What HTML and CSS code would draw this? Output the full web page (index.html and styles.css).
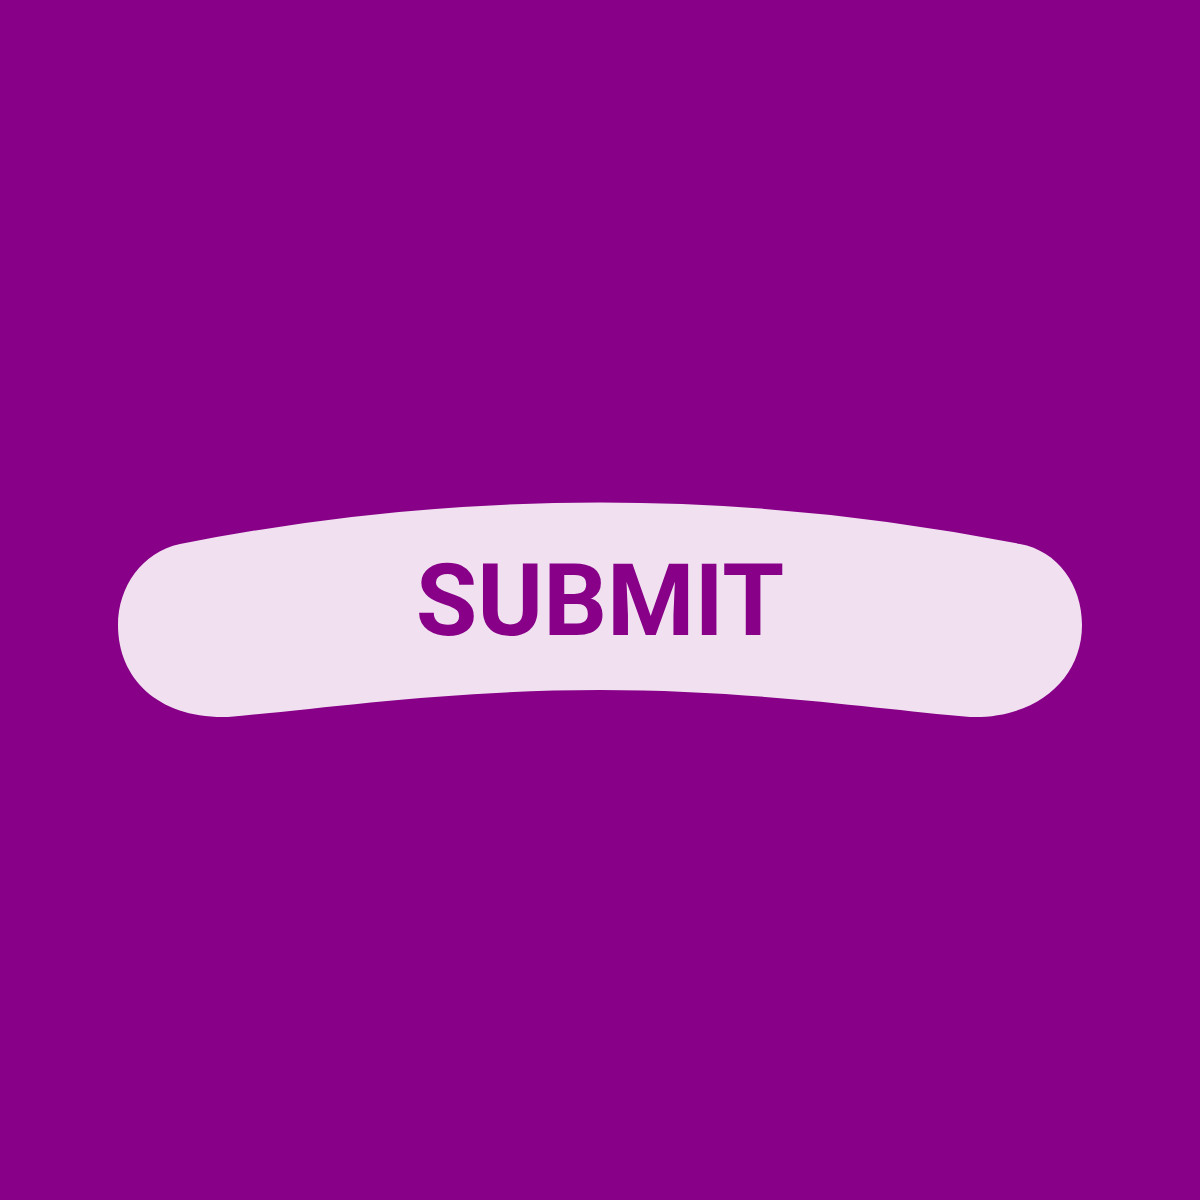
FILE: index.html
```html
<!DOCTYPE html>
<html lang="en">
<head>
<meta charset="utf-8">
<title>Submit</title>
<link rel="stylesheet" href="styles.css">
</head>
<body>
<main class="stage">
  <button class="blob-button" type="submit">
    <svg class="blob-shape" viewBox="0 0 1200 1200" width="1200" height="1200" aria-hidden="true">
      <path d="M180 544 Q600 461 1020 544 C1058 551 1082 585 1082 625 C1082 680 1035 719 970 717 C878 709 750 690 600 690 C450 690 320 709 228 717 C160 719 118 680 118 625 C118 587 142 552 180 544 Z"/>
    </svg>
    <span class="blob-label">SUBMIT</span>
  </button>
</main>
</body>
</html>
```
FILE: styles.css
```css
html, body {
  margin: 0;
  padding: 0;
  background: #880088;
}

.stage {
  width: 1200px;
  height: 1200px;
  display: grid;
}

.blob-button {
  display: grid;
  place-items: center;
  margin: 0;
  padding: 0;
  border: 0;
  background: transparent;
  cursor: pointer;
}

.blob-shape,
.blob-label {
  grid-area: 1 / 1;
}

.blob-shape {
  display: block;
  fill: #f0e0f0;
}

.blob-label {
  font-family: Roboto, "Liberation Sans", sans-serif;
  font-weight: 700;
  font-size: 100px;
  line-height: 1.172;
  color: #880088;
  letter-spacing: 0;
  padding-top: 2px;
}
```
